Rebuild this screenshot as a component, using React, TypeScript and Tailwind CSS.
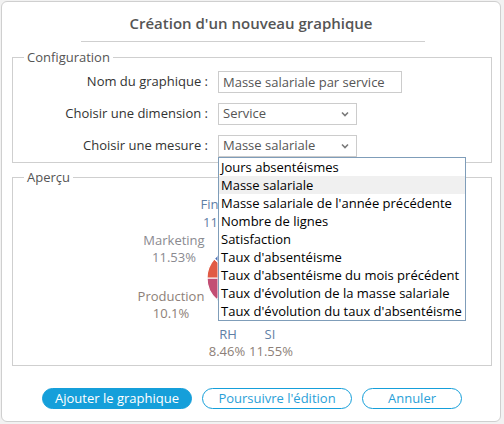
import { useState } from "react";

const mesures = [
  "Jours absentéismes",
  "Masse salariale",
  "Masse salariale de l'année précédente",
  "Nombre de lignes",
  "Satisfaction",
  "Taux d'absentéisme",
  "Taux d'absentéisme du mois précédent",
  "Taux d'évolution de la masse salariale",
  "Taux d'évolution du taux d'absentéisme",
];

// slices, degrees clockwise from 12 o'clock
const slices = [
  { from: 352, to: 400, color: "#3f8fc4" },
  { from: 40, to: 95, color: "#f2b134" },
  { from: 95, to: 155, color: "#6cb65a" },
  { from: 155, to: 195, color: "#8a5fb0" },
  { from: 195, to: 222, color: "#2fb0a8" },
  { from: 222, to: 270, color: "#c24e74" },
  { from: 270, to: 311.5, color: "#e15b45" },
  { from: 311.5, to: 352, color: "#4b6fb5" },
];

function slicePath(cx: number, cy: number, r: number, a0: number, a1: number) {
  const pt = (a: number) => [cx + r * Math.sin((a * Math.PI) / 180), cy - r * Math.cos((a * Math.PI) / 180)];
  const [x0, y0] = pt(a0);
  const [x1, y1] = pt(a1);
  const large = a1 - a0 > 180 ? 1 : 0;
  return `M ${cx} ${cy} L ${x0} ${y0} A ${r} ${r} 0 ${large} 1 ${x1} ${y1} Z`;
}

function Chevron() {
  return (
    <svg width="8" height="6" viewBox="0 0 8 6" className="shrink-0">
      <path d="M1 1.5 L4 4.5 L7 1.5" fill="none" stroke="#7a7a7a" strokeWidth="1.6" />
    </svg>
  );
}

export default function App() {
  const [open] = useState(true);

  return (
    <div className="min-h-screen bg-[#f2f2f2] p-px font-['Open_Sans',sans-serif] text-[13px]">
      <div className="w-[500px] h-[421px] bg-white border border-[#cfcfcf] rounded-[6px]">
        {/* Title */}
        <h1 className="pt-[10px] text-center text-[15px] leading-[22px] font-semibold text-[#555]">
          Création d'un nouveau graphique
        </h1>
        <div className="ml-[79px] mt-[7px] h-px w-[344px] bg-[#cfcfcf]" />

        {/* Configuration */}
        <fieldset className="ml-[10px] mt-[6px] w-[480px] border border-[#cfcfcf] px-0 pt-[5px] pb-[5px]">
          <legend className="ml-[11px] px-[3px] leading-[18px] text-[#555]">Configuration</legend>
          <div className="flex flex-col gap-[10px]">
            <div className="flex items-center h-[22px]">
              <label className="w-[195px] text-right text-[#333]">Nom du graphique :</label>
              <div className="ml-[10px] w-[184px] h-[22px] border border-[#cccccc] px-[4px] leading-[20px] text-[#555]">
                Masse salariale par service
              </div>
            </div>
            <div className="flex items-center h-[22px]">
              <label className="w-[195px] text-right text-[#333]">Choisir une dimension :</label>
              <div className="ml-[10px] w-[139px] h-[22px] border border-[#cccccc] pl-[4px] pr-[7px] flex items-center justify-between text-[#555]">
                <span>Service</span>
                <Chevron />
              </div>
            </div>
            <div className="flex items-center h-[22px]">
              <label className="w-[195px] text-right text-[#333]">Choisir une mesure :</label>
              <div className="relative ml-[10px]">
                <div className="w-[139px] h-[22px] border border-[#cccccc] pl-[4px] pr-[7px] flex items-center justify-between text-[#555]">
                  <span>Masse salariale</span>
                  <Chevron />
                </div>
                {open && (
                  <ul className="absolute left-0 top-[22px] z-10 w-[248px] border border-[#7f9db9] bg-white text-black">
                    {mesures.map((m) => (
                      <li
                        key={m}
                        className={
                          "h-[18px] leading-[18px] px-[2px] whitespace-nowrap " +
                          (m === "Masse salariale" ? "bg-[#f0f0f0]" : "")
                        }
                      >
                        {m}
                      </li>
                    ))}
                  </ul>
                )}
              </div>
            </div>
          </div>
        </fieldset>

        {/* Aperçu */}
        <fieldset className="ml-[10px] mt-[5px] w-[480px] border border-[#cfcfcf] px-0 py-0">
          <legend className="ml-[11px] px-[3px] leading-[18px] text-[#555]">Aperçu</legend>
          <div className="h-[179px]">
            <svg width="478" height="179" className="block">
              <defs>
                <clipPath id="under-list">
                  <rect x="0" y="0" width="217.5" height="400" />
                </clipPath>
              </defs>
              <g transform="translate(-13 -186)" fontFamily="'Open Sans', sans-serif" fontSize="13">
                <g clipPath="url(#under-list)">
                  {slices.map((s, i) => (
                    <path key={i} d={slicePath(236, 278, 29, s.from, s.to)} fill={s.color} stroke="#fff" strokeWidth="1.2" />
                  ))}
                </g>
                {/* labels partly hidden behind the open list */}
                <text x="200.5" y="209" fill="#5f80a6">Fin</text>
                <text x="203" y="227" fill="#5f80a6">11.</text>
                <g textAnchor="middle">
                  <text x="174" y="245" fill="#8a8a90">Marketing</text>
                  <text x="174" y="262" fill="#8a8a90">11.53%</text>
                  <text x="171" y="301" fill="#8d7f78">Production</text>
                  <text x="171" y="318" fill="#8d7f78">10.1%</text>
                  <text x="228" y="338.5" fill="#5f80a6">RH</text>
                  <text x="227" y="355.5" fill="#8d7f78">8.46%</text>
                  <text x="270" y="338.5" fill="#5f80a6">SI</text>
                  <text x="271" y="355.5" fill="#8d7f78">11.55%</text>
                </g>
              </g>
            </svg>
          </div>
        </fieldset>

        {/* Actions */}
        <div className="mt-[22px] pl-[40px] flex gap-[10px]">
          <button className="w-[150px] h-[21px] rounded-full bg-[#159fda] border border-[#159fda] text-white leading-[19px]">
            Ajouter le graphique
          </button>
          <button className="w-[150px] h-[21px] rounded-full bg-white border border-[#159fda] text-[#2a9fd8] leading-[19px]">
            Poursuivre l'édition
          </button>
          <button className="w-[100px] h-[21px] rounded-full bg-white border border-[#159fda] text-[#2a9fd8] leading-[19px]">
            Annuler
          </button>
        </div>
      </div>
    </div>
  );
}
